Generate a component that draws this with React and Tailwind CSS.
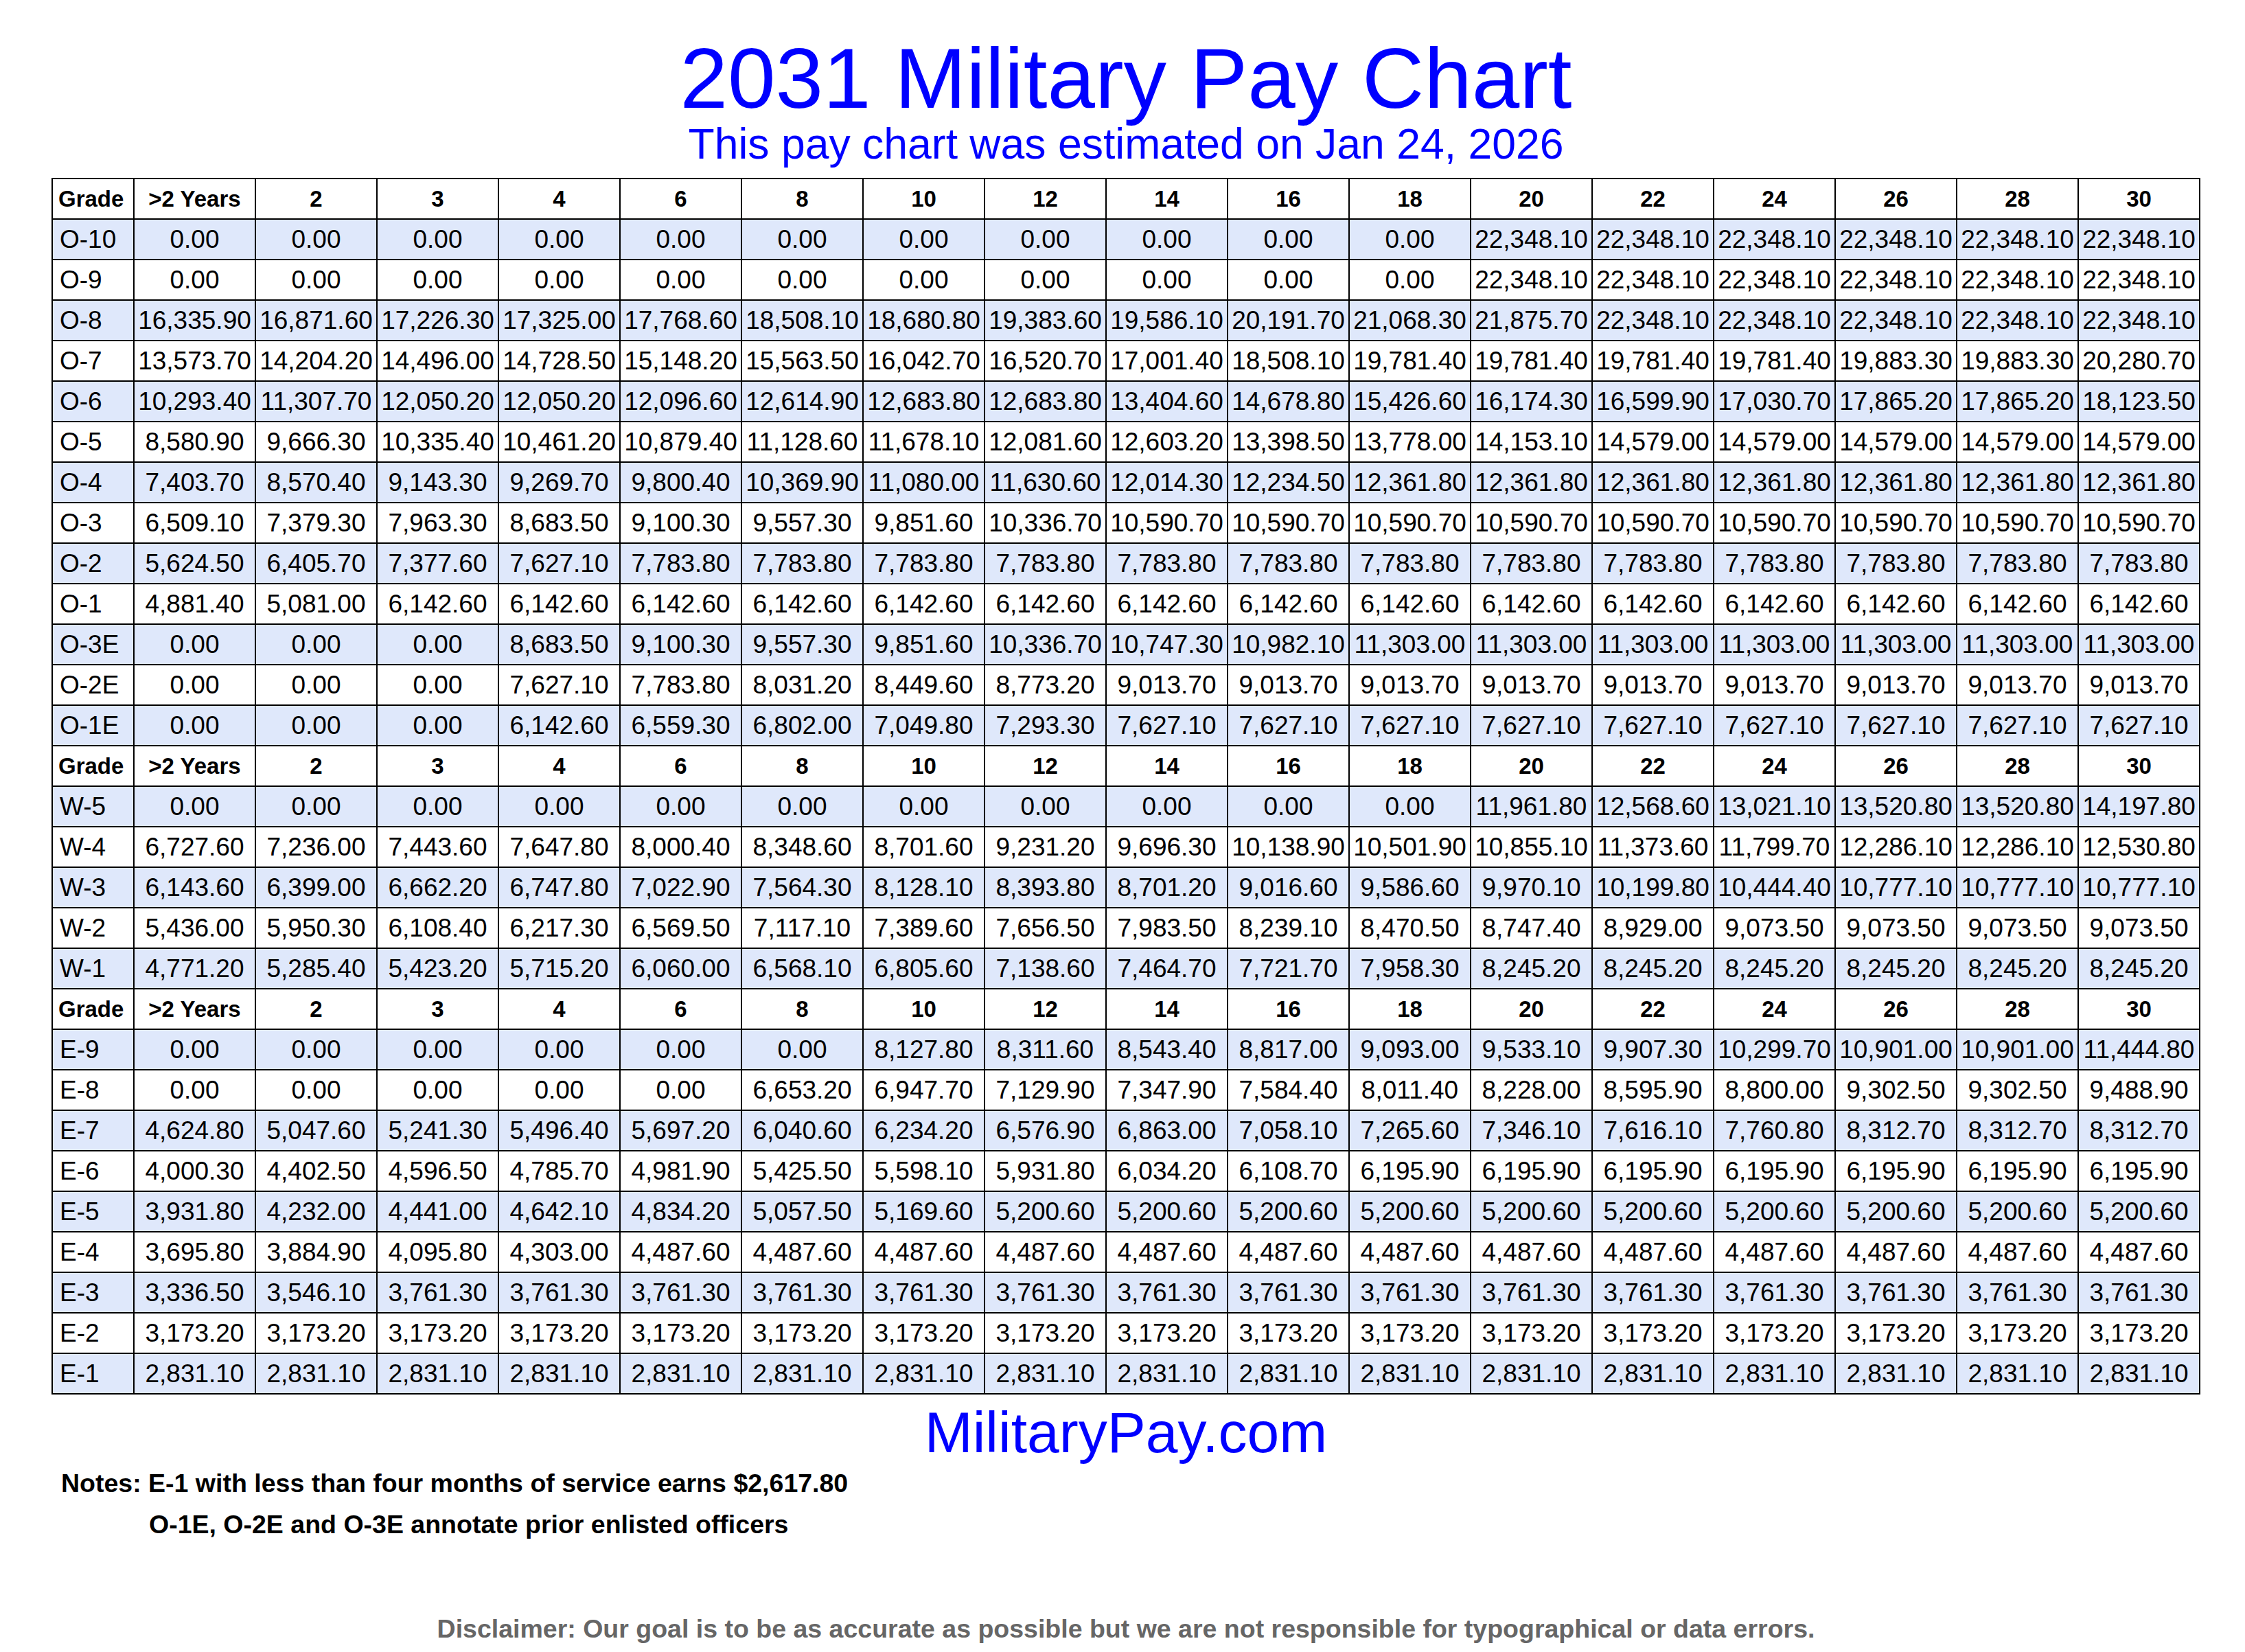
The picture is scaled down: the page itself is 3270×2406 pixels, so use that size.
import React from "react";

const years = [">2 Years", "2", "3", "4", "6", "8", "10", "12", "14", "16", "18", "20", "22", "24", "26", "28", "30"];

const rep = (v, n) => Array(n).fill(v);

const officers = [
  ["O-10", [...rep("0.00", 11), ...rep("22,348.10", 6)]],
  ["O-9", [...rep("0.00", 11), ...rep("22,348.10", 6)]],
  ["O-8", ["16,335.90", "16,871.60", "17,226.30", "17,325.00", "17,768.60", "18,508.10", "18,680.80", "19,383.60", "19,586.10", "20,191.70", "21,068.30", "21,875.70", ...rep("22,348.10", 5)]],
  ["O-7", ["13,573.70", "14,204.20", "14,496.00", "14,728.50", "15,148.20", "15,563.50", "16,042.70", "16,520.70", "17,001.40", "18,508.10", "19,781.40", "19,781.40", "19,781.40", "19,781.40", "19,883.30", "19,883.30", "20,280.70"]],
  ["O-6", ["10,293.40", "11,307.70", "12,050.20", "12,050.20", "12,096.60", "12,614.90", "12,683.80", "12,683.80", "13,404.60", "14,678.80", "15,426.60", "16,174.30", "16,599.90", "17,030.70", "17,865.20", "17,865.20", "18,123.50"]],
  ["O-5", ["8,580.90", "9,666.30", "10,335.40", "10,461.20", "10,879.40", "11,128.60", "11,678.10", "12,081.60", "12,603.20", "13,398.50", "13,778.00", "14,153.10", ...rep("14,579.00", 5)]],
  ["O-4", ["7,403.70", "8,570.40", "9,143.30", "9,269.70", "9,800.40", "10,369.90", "11,080.00", "11,630.60", "12,014.30", "12,234.50", ...rep("12,361.80", 7)]],
  ["O-3", ["6,509.10", "7,379.30", "7,963.30", "8,683.50", "9,100.30", "9,557.30", "9,851.60", "10,336.70", ...rep("10,590.70", 9)]],
  ["O-2", ["5,624.50", "6,405.70", "7,377.60", "7,627.10", ...rep("7,783.80", 13)]],
  ["O-1", ["4,881.40", "5,081.00", ...rep("6,142.60", 15)]],
  ["O-3E", [...rep("0.00", 3), "8,683.50", "9,100.30", "9,557.30", "9,851.60", "10,336.70", "10,747.30", "10,982.10", ...rep("11,303.00", 7)]],
  ["O-2E", [...rep("0.00", 3), "7,627.10", "7,783.80", "8,031.20", "8,449.60", "8,773.20", ...rep("9,013.70", 9)]],
  ["O-1E", [...rep("0.00", 3), "6,142.60", "6,559.30", "6,802.00", "7,049.80", "7,293.30", ...rep("7,627.10", 9)]],
];

const warrant = [
  ["W-5", [...rep("0.00", 11), "11,961.80", "12,568.60", "13,021.10", "13,520.80", "13,520.80", "14,197.80"]],
  ["W-4", ["6,727.60", "7,236.00", "7,443.60", "7,647.80", "8,000.40", "8,348.60", "8,701.60", "9,231.20", "9,696.30", "10,138.90", "10,501.90", "10,855.10", "11,373.60", "11,799.70", "12,286.10", "12,286.10", "12,530.80"]],
  ["W-3", ["6,143.60", "6,399.00", "6,662.20", "6,747.80", "7,022.90", "7,564.30", "8,128.10", "8,393.80", "8,701.20", "9,016.60", "9,586.60", "9,970.10", "10,199.80", "10,444.40", "10,777.10", "10,777.10", "10,777.10"]],
  ["W-2", ["5,436.00", "5,950.30", "6,108.40", "6,217.30", "6,569.50", "7,117.10", "7,389.60", "7,656.50", "7,983.50", "8,239.10", "8,470.50", "8,747.40", "8,929.00", "9,073.50", "9,073.50", "9,073.50", "9,073.50"]],
  ["W-1", ["4,771.20", "5,285.40", "5,423.20", "5,715.20", "6,060.00", "6,568.10", "6,805.60", "7,138.60", "7,464.70", "7,721.70", "7,958.30", ...rep("8,245.20", 6)]],
];

const enlisted = [
  ["E-9", [...rep("0.00", 6), "8,127.80", "8,311.60", "8,543.40", "8,817.00", "9,093.00", "9,533.10", "9,907.30", "10,299.70", "10,901.00", "10,901.00", "11,444.80"]],
  ["E-8", [...rep("0.00", 5), "6,653.20", "6,947.70", "7,129.90", "7,347.90", "7,584.40", "8,011.40", "8,228.00", "8,595.90", "8,800.00", "9,302.50", "9,302.50", "9,488.90"]],
  ["E-7", ["4,624.80", "5,047.60", "5,241.30", "5,496.40", "5,697.20", "6,040.60", "6,234.20", "6,576.90", "6,863.00", "7,058.10", "7,265.60", "7,346.10", "7,616.10", "7,760.80", ...rep("8,312.70", 3)]],
  ["E-6", ["4,000.30", "4,402.50", "4,596.50", "4,785.70", "4,981.90", "5,425.50", "5,598.10", "5,931.80", "6,034.20", "6,108.70", ...rep("6,195.90", 7)]],
  ["E-5", ["3,931.80", "4,232.00", "4,441.00", "4,642.10", "4,834.20", "5,057.50", "5,169.60", ...rep("5,200.60", 10)]],
  ["E-4", ["3,695.80", "3,884.90", "4,095.80", "4,303.00", ...rep("4,487.60", 13)]],
  ["E-3", ["3,336.50", "3,546.10", ...rep("3,761.30", 15)]],
  ["E-2", rep("3,173.20", 17)],
  ["E-1", rep("2,831.10", 17)],
];

function HeaderRow() {
  return (
    <tr className="bg-white">
      <th className="h-[59px] border-2 border-black pl-[8px] text-left text-[33px] font-bold">Grade</th>
      {years.map((y) => (
        <th key={y} className="h-[59px] border-2 border-black text-center text-[33px] font-bold">
          {y}
        </th>
      ))}
    </tr>
  );
}

function Section({ rows }) {
  return (
    <>
      <HeaderRow />
      {rows.map(([grade, vals], i) => (
        <tr key={grade} className={i % 2 === 0 ? "bg-[#dfe8fb]" : "bg-white"}>
          <td className="h-[59px] border-2 border-black pl-[10px] text-left text-[37px]">{grade}</td>
          {vals.map((v, j) => (
            <td key={j} className="h-[59px] border-2 border-black text-center text-[37px] whitespace-nowrap">
              {v}
            </td>
          ))}
        </tr>
      ))}
    </>
  );
}

export default function App() {
  return (
    <div className="min-h-[2406px] w-[3270px] bg-white text-black font-['Liberation_Sans',Arial,sans-serif]">
      <div className="ml-[75px] w-[3130px] pt-[51px]">
        <div className="text-center text-[125px] leading-[125px] text-[#0000ff]">2031 Military Pay Chart</div>
        <div className="mt-[2px] text-center text-[62.5px] leading-[62px] text-[#0000ff]">
          This pay chart was estimated on Jan 24, 2026
        </div>
        <table className="mt-[19px] w-[3130px] table-fixed border-collapse leading-none">
          <colgroup>
            <col className="w-[119px]" />
            {years.map((y) => (
              <col key={y} />
            ))}
          </colgroup>
          <tbody>
            <Section rows={officers} />
            <Section rows={warrant} />
            <Section rows={enlisted} />
          </tbody>
        </table>
        <div className="mt-[13px] text-center text-[84px] leading-[84px] text-[#0000ff]">MilitaryPay.com</div>
        <div className="mt-[2px] text-[37.5px] font-bold leading-[60px]">
          <div className="pl-[14px]">Notes: E-1 with less than four months of service earns $2,617.80</div>
          <div className="pl-[142px]">O-1E, O-2E and O-3E annotate prior enlisted officers</div>
        </div>
        <div className="mt-[104px] text-center text-[37.5px] font-bold leading-[37px] text-[#666666]">
          Disclaimer: Our goal is to be as accurate as possible but we are not responsible for typographical or data errors.
        </div>
      </div>
    </div>
  );
}
